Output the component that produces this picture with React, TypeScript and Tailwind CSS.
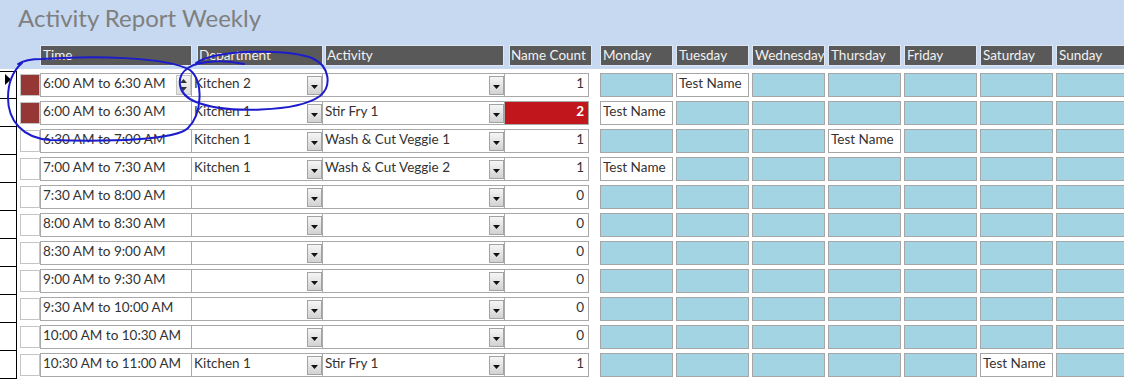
import React from 'react';

type Row = {
  time: string;
  dept: string;
  act: string;
  count: number;
  swatch?: boolean;
  spin?: boolean;
  red?: boolean;
  names: number[];
};

const rows: Row[] = [
  { time: '6:00 AM to 6:30 AM', dept: 'Kitchen 2', act: '', count: 1, swatch: true, spin: true, names: [1] },
  { time: '6:00 AM to 6:30 AM', dept: 'Kitchen 1', act: 'Stir Fry 1', count: 2, swatch: true, red: true, names: [0] },
  { time: '6:30 AM to 7:00 AM', dept: 'Kitchen 1', act: 'Wash & Cut Veggie 1', count: 1, names: [3] },
  { time: '7:00 AM to 7:30 AM', dept: 'Kitchen 1', act: 'Wash & Cut Veggie 2', count: 1, names: [0] },
  { time: '7:30 AM to 8:00 AM', dept: '', act: '', count: 0, names: [] },
  { time: '8:00 AM to 8:30 AM', dept: '', act: '', count: 0, names: [] },
  { time: '8:30 AM to 9:00 AM', dept: '', act: '', count: 0, names: [] },
  { time: '9:00 AM to 9:30 AM', dept: '', act: '', count: 0, names: [] },
  { time: '9:30 AM to 10:00 AM', dept: '', act: '', count: 0, names: [] },
  { time: '10:00 AM to 10:30 AM', dept: '', act: '', count: 0, names: [] },
  { time: '10:30 AM to 11:00 AM', dept: 'Kitchen 1', act: 'Stir Fry 1', count: 1, names: [5] },
];

const days = ['Monday', 'Tuesday', 'Wednesday', 'Thursday', 'Friday', 'Saturday', 'Sunday'];

const DropButton = () => (
  <div className="w-[15px] h-[19px] mb-px shrink-0 border border-[#a3a3a3] bg-gradient-to-b from-[#f6f6f6] to-[#d2d2d2] flex items-end justify-center pb-[5px]">
    <svg width="7" height="4" viewBox="0 0 7 4">
      <path d="M0 0 H7 L3.5 4 Z" fill="#111" />
    </svg>
  </div>
);

const Spinner = () => (
  <div className="w-[15px] h-[20px] mb-px shrink-0 border border-[#c4c4c4] bg-gradient-to-b from-[#f4f4f4] to-[#dedede] flex flex-col items-center justify-between py-[3px]">
    <svg width="7" height="4" viewBox="0 0 7 4">
      <path d="M0 4 L3.5 0 L7 4 Z" fill="#333" />
    </svg>
    <svg width="7" height="4" viewBox="0 0 7 4">
      <path d="M0 0 H7 L3.5 4 Z" fill="#333" />
    </svg>
  </div>
);

export default function App() {
  return (
    <div
      className="relative w-[1124px] h-[382px] overflow-hidden bg-white text-[#333333]"
      style={{ fontFamily: 'Lato, "Open Sans", sans-serif' }}
    >
      <div className="h-[69px] bg-[#c6d9f1]">
        <div className="h-[45px] pl-[18px] pt-[3px] text-[24px] leading-[30px] text-[#7f7f7f]">
          Activity Report Weekly
        </div>
        <div className="flex h-[21px] pl-[40px] text-[13.5px] leading-[19px] text-[#f2f2f2]">
          <div className="shrink-0 w-[152px] bg-[#595959] border border-[#dde6f2] pl-[2px]">Time</div>
          <div className="shrink-0 ml-[5px] w-[126px] bg-[#595959] border border-[#dde6f2] pl-[1px]">Department</div>
          <div className="shrink-0 ml-[2px] w-[179px] bg-[#595959] border border-[#dde6f2] pl-[1px]">Activity</div>
          <div className="shrink-0 ml-[5px] w-[83px] bg-[#595959] border border-[#dde6f2] pl-[1px] overflow-hidden whitespace-nowrap">Name Count</div>
          <div className="shrink-0 ml-[8px] flex gap-[3px]">
            {days.map(d => (
              <div key={d} className="w-[73px] shrink-0 bg-[#595959] border border-[#dde6f2] pl-[2px] overflow-hidden whitespace-nowrap">
                {d}
              </div>
            ))}
          </div>
        </div>
      </div>

      <div className="pt-[2px] text-[13.5px]">
        {rows.map((r, i) => (
          <div key={i} className="flex h-[28px]">
            <div className={`relative shrink-0 w-[17px] h-full border-r border-b border-black ${i === 0 ? 'border-t' : ''}`}>
              {i === 0 && (
                <svg className="absolute left-[5px] top-[2px]" width="6" height="11" viewBox="0 0 6 11">
                  <path d="M0 0 L6 5.5 L0 11 Z" fill="#000" />
                </svg>
              )}
            </div>
            <div className={`shrink-0 ml-[3px] mt-[3px] w-[20px] h-[22px] border border-[#c4c4c4] ${r.swatch ? 'bg-[#953735]' : 'bg-white'}`} />
            <div className="shrink-0 mt-[2px] h-[24px] w-[152px] border border-[#a9a9a9] flex items-end">
              <div className="flex-1 self-start pl-[2px] leading-[19px] whitespace-nowrap">{r.time}</div>
              {r.spin && <Spinner />}
            </div>
            <div className="shrink-0 mt-[2px] h-[24px] w-[131px] border border-l-0 border-[#a9a9a9] flex items-end">
              <div className="flex-1 self-start pl-[2px] leading-[19px] whitespace-nowrap">{r.dept}</div>
              <DropButton />
            </div>
            <div className="shrink-0 mt-[2px] h-[24px] w-[182px] border border-l-0 border-[#a9a9a9] flex items-end">
              <div className="flex-1 self-start pl-[2px] leading-[19px] whitespace-nowrap">{r.act}</div>
              <DropButton />
            </div>
            <div
              className={`shrink-0 mt-[2px] h-[24px] w-[84px] border border-l-0 border-[#a9a9a9] text-right pr-[4px] leading-[19px] ${
                r.red ? 'bg-[#c0161c] text-white font-bold' : ''
              }`}
            >
              {r.count}
            </div>
            <div className="shrink-0 ml-[11px] flex gap-[3px]">
              {days.map((d, k) => {
                const has = r.names.includes(k);
                return (
                  <div
                    key={d}
                    className={`mt-[2px] h-[24px] w-[73px] shrink-0 border border-[#a6a6a6] pl-[2px] leading-[19px] whitespace-nowrap overflow-hidden ${
                      has ? 'bg-white' : 'bg-[#a3d4e3]'
                    }`}
                  >
                    {has ? 'Test Name' : ''}
                  </div>
                );
              })}
            </div>
          </div>
        ))}
      </div>

      <svg className="absolute inset-0 pointer-events-none" width="1124" height="382" viewBox="0 0 1124 382" fill="none">
        <path
          d="M18 64 C 24 60, 32 59, 42 59 C 90 56, 165 56, 190 70 C 204 82, 202 114, 188 128 C 176 140, 110 142, 50 140 C 22 138, 8 120, 8 98 C 8 82, 14 70, 22 63"
          stroke="#1c1ccc"
          strokeWidth="2"
          strokeLinecap="round"
        />
        <path
          d="M244 64 C 226 60, 200 60, 188 68 C 176 76, 176 94, 196 102 C 226 114, 298 112, 320 96 C 332 86, 330 66, 312 58 C 290 50, 240 50, 214 56 C 205 58, 199 61, 196 63"
          stroke="#1c1ccc"
          strokeWidth="2"
          strokeLinecap="round"
        />
      </svg>
    </div>
  );
}
